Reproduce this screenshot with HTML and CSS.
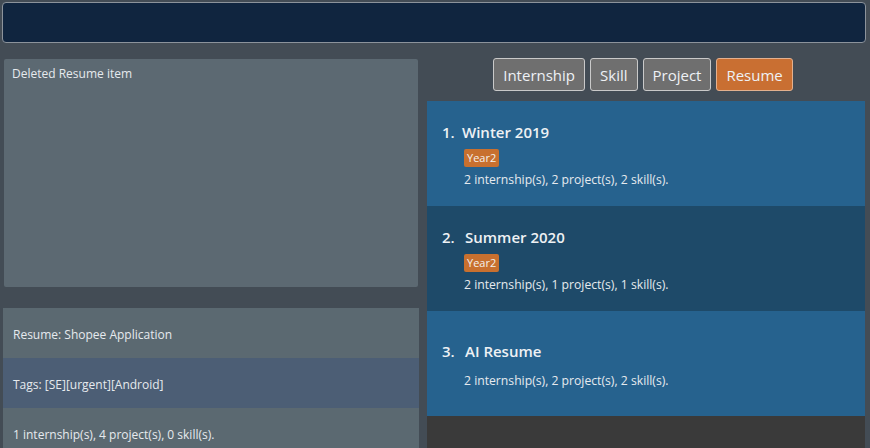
FILE: index.html
```html
<!DOCTYPE html>
<html>
<head>
<meta charset="utf-8">
<link rel="stylesheet" href="styles.css">
</head>
<body>
<div class="app">
  <div class="command"></div>
  <div class="main">
    <div class="left">
      <div class="result">Deleted Resume item</div>
      <div class="detail">
        <div class="row">Resume: Shopee Application</div>
        <div class="row alt">Tags: [SE][urgent][Android]</div>
        <div class="row">1 internship(s), 4 project(s), 0 skill(s).</div>
      </div>
    </div>
    <div class="right">
      <div class="tabs">
        <button class="tab">Internship</button>
        <button class="tab">Skill</button>
        <button class="tab">Project</button>
        <button class="tab active">Resume</button>
      </div>
      <div class="list">
        <div class="item">
          <div class="title"><span class="num">1.</span>Winter 2019</div>
          <div class="tags"><span class="tag">Year2</span></div>
          <div class="desc">2 internship(s), 2 project(s), 2 skill(s).</div>
        </div>
        <div class="item odd">
          <div class="title"><span class="num wide">2.</span>Summer 2020</div>
          <div class="tags"><span class="tag">Year2</span></div>
          <div class="desc">2 internship(s), 1 project(s), 1 skill(s).</div>
        </div>
        <div class="item">
          <div class="title"><span class="num wide">3.</span>AI Resume</div>
          <div class="desc">2 internship(s), 2 project(s), 2 skill(s).</div>
        </div>
        <div class="empty"></div>
      </div>
    </div>
  </div>
</div>
</body>
</html>
```
FILE: styles.css
```css
* { box-sizing: border-box; }
html, body { margin: 0; padding: 0; }
body {
  width: 870px;
  height: 448px;
  overflow: hidden;
  background: #434c55;
  font-family: "Open Sans", "Noto Sans", sans-serif;
  color: #e6eaee;
}
.app { display: flex; flex-direction: column; height: 448px; }
.command {
  flex: none;
  margin: 2px 4px 0 2px;
  height: 41px;
  background: #10253f;
  border: 1px solid #8c939b;
  border-radius: 4px;
}
.main {
  flex: 1;
  display: flex;
  margin-top: 4px;
  min-height: 0;
}
.left {
  width: 419px;
  flex: none;
  display: flex;
  flex-direction: column;
  padding: 12px 0 0 3px;
}
.result {
  flex: none;
  margin-left: 1px;
  width: 414px;
  height: 228px;
  background: #5c6972;
  border-radius: 2px;
  padding: 6px 8px;
  font-size: 12px;
}
.detail {
  flex: none;
  margin-top: 21px;
  width: 416px;
  background: #5b6971;
}
.row {
  height: 50px;
  display: flex;
  align-items: center;
  padding: 2px 10px 0;
  font-size: 12px;
}
.row.alt { background: #4c5e75; }
.right {
  flex: 1;
  display: flex;
  flex-direction: column;
  padding: 0 5px 0 8px;
}
.tabs {
  flex: none;
  display: flex;
  justify-content: center;
  gap: 5px;
  margin-top: 11px;
  padding-right: 6px;
  height: 33px;
}
.tab {
  font-family: inherit;
  font-size: 15px;
  color: #eef1f5;
  background: #6f6f6f;
  border: 1px solid #c9c9c9;
  border-radius: 3px;
  padding: 0 9px;
  height: 33px;
}
.tab.active {
  background: #c96f32;
  border-color: #e3b08e;
}
.list {
  flex: 1;
  margin-top: 10px;
  display: flex;
  flex-direction: column;
  background: #3a3a3a;
}
.item {
  height: 105px;
  flex: none;
  background: #26628e;
  display: flex;
  flex-direction: column;
  justify-content: center;
  padding: 3px 0 0 15px;
}
.item.odd { background: #1e4a69; }
.title {
  font-size: 15px;
  font-weight: 600;
  color: #eef1f4;
  display: flex;
  line-height: 20px;
  margin-bottom: 11px;
}
.num { width: 20px; flex: none; }
.num.wide { width: 23px; }
.tags { margin: -4px 0 4px 22px; display: flex; }
.tag {
  background: #c8702f;
  color: #f4f0ec;
  font-size: 11px;
  border-radius: 2px;
  padding: 0 3px;
  height: 18px;
  line-height: 18px;
}
.desc {
  margin-left: 22px;
  font-size: 12.2px;
  line-height: 18px;
}
.empty { flex: 1; }
```
